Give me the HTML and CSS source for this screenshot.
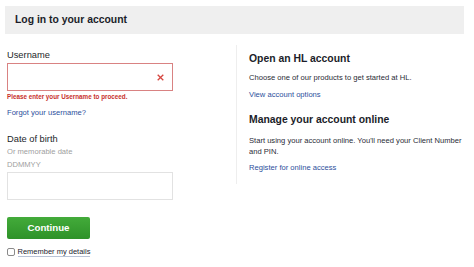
FILE: index.html
```html
<!DOCTYPE html>
<html>
<head>
<meta charset="utf-8">
<link rel="stylesheet" href="styles.css">
</head>
<body>
<div class="page">
  <div class="header">Log in to your account</div>
  <div class="main">
    <div class="left">
      <div class="label label-user">Username</div>
      <div class="input input-error">
        <svg class="xicon" width="7" height="7" viewBox="0 0 7 7"><path d="M0.7 0.7L6.3 6.3M6.3 0.7L0.7 6.3" stroke="#d6463f" stroke-width="1.3" fill="none"/></svg>
      </div>
      <div class="error">Please enter your Username to proceed.</div>
      <a class="link forgot" href="#">Forgot your username?</a>
      <div class="label label-dob">Date of birth</div>
      <div class="hint hint-1">Or memorable date</div>
      <div class="hint hint-2">DDMMYY</div>
      <div class="input input-dob"></div>
      <button class="btn">Continue</button>
      <label class="remember"><span class="checkbox"></span><span class="remember-text">Remember my details</span></label>
    </div>
    <div class="right">
      <div class="heading h-open">Open an HL account</div>
      <p class="body b-choose">Choose one of our products to get started at HL.</p>
      <a class="link view" href="#">View account options</a>
      <div class="heading h-manage">Manage your account online</div>
      <p class="body b-start">Start using your account online. You'll need your Client Number and PIN.</p>
      <a class="link register" href="#">Register for online access</a>
    </div>
  </div>
</div>
</body>
</html>
```
FILE: styles.css
```css
html, body {
  margin: 0;
  padding: 0;
  background: #ffffff;
}
body {
  font-family: "Liberation Sans", Arial, Helvetica, sans-serif;
  color: #1d1f2b;
}
.page {
  width: 474px;
  height: 267px;
  overflow: hidden;
}
.header {
  margin: 6px 10px 0 5px;
  height: 28px;
  background: #efefef;
  padding-left: 10px;
  display: flex;
  align-items: center;
  font-size: 10.4px;
  line-height: 12px;
  font-weight: bold;
  color: #1b1d29;
}
.main {
  display: flex;
  align-items: flex-start;
  margin-top: 11px;
  padding-left: 7px;
}
.left {
  width: 229px;
  display: flex;
  flex-direction: column;
  align-items: flex-start;
}
.label {
  font-size: 9.3px;
  line-height: 11px;
  color: #1d1f2b;
}
.label-user { margin-top: 4.6px; }
.input {
  box-sizing: border-box;
  width: 166px;
  height: 28px;
  border: 1px solid #e2e2e2;
  background: #fff;
  position: relative;
}
.input-error {
  margin-top: 2.4px;
  border-color: #d98282;
}
.xicon {
  position: absolute;
  right: 8px;
  top: 10px;
}
.error {
  margin-top: 2.1px;
  font-size: 6.3px;
  line-height: 8px;
  font-weight: bold;
  color: #c8302c;
}
.link {
  font-size: 7.6px;
  line-height: 9px;
  color: #2c4f9c;
  text-decoration: none;
  display: block;
}
.forgot { margin-top: 6.8px; }
.label-dob { margin-top: 17.4px; }
.hint {
  font-size: 7.6px;
  line-height: 9px;
  color: #a0a0a0;
}
.hint-1 { margin-top: 1.6px; }
.hint-2 { margin-top: 3.7px; }
.input-dob { margin-top: 3.4px; }
.btn {
  margin-top: 17px;
  width: 83px;
  height: 22px;
  border: none;
  border-radius: 2px;
  background: linear-gradient(#43ab3a, #2e9229);
  color: #ffffff;
  font-family: "Liberation Sans", Arial, Helvetica, sans-serif;
  font-size: 9.7px;
  line-height: 22px;
  font-weight: bold;
  padding: 0;
}
.remember {
  margin-top: 8px;
  display: flex;
  align-items: center;
  font-size: 7.5px;
  line-height: 9px;
  color: #22242e;
}
.checkbox {
  box-sizing: border-box;
  width: 8px;
  height: 8px;
  border: 1px solid #8a8a8a;
  border-radius: 2px;
  background: #fff;
  margin-right: 2.5px;
  margin-top: 1px;
}
.remember-text {
  border-bottom: 1px solid #b9c3d6;
  line-height: 9px;
}
.right {
  width: 215px;
  border-left: 1px solid #eeeeee;
  padding: 8.1px 0 12.4px 12px;
}
.heading {
  font-size: 10.4px;
  line-height: 12px;
  font-weight: bold;
  color: #1b1d29;
}
.body {
  margin: 0;
  font-size: 7.6px;
  line-height: 9px;
  color: #2a2c36;
}
.b-choose { margin-top: 7.8px; }
.view { margin-top: 7.7px; }
.h-manage { margin-top: 15.8px; }
.b-start {
  margin-top: 8.5px;
  line-height: 11px;
}
.register { margin-top: 6.2px; }
```
